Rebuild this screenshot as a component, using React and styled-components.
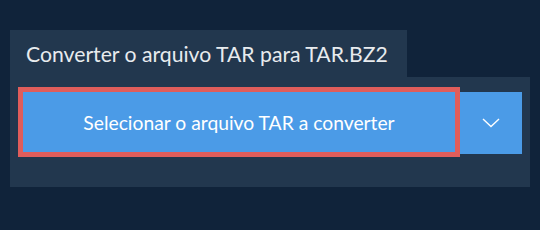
import styled, { createGlobalStyle } from 'styled-components';

const GlobalStyle = createGlobalStyle`
  html, body {
    margin: 0;
    padding: 0;
    background: #10233a;
  }
  body {
    font-family: Lato, "Noto Sans", sans-serif;
  }
`;

const StyledPage = styled.div`
  width: 540px;
  height: 230px;
  padding: 30px 10px 0 10px;
  box-sizing: border-box;
`;

const StyledTab = styled.div`
  display: inline-flex;
  align-items: center;
  height: 47px;
  padding: 0 19px 0 16px;
  background: #22374e;
  color: #e8ebee;
  font-size: 21.2px;
`;

const StyledPanel = styled.div`
  display: flex;
  align-items: flex-start;
  padding: 10px 8px 30px 8px;
  background: #22374e;
`;

const StyledMainButton = styled.button`
  flex: 1;
  height: 70px;
  box-sizing: border-box;
  border: 5px solid #e05d5b;
  background: #4b9be7;
  color: #ffffff;
  font-family: Lato, "Noto Sans", sans-serif;
  font-size: 19.3px;
  padding: 0;
  cursor: pointer;
`;

const StyledMenuButton = styled.button`
  display: flex;
  align-items: center;
  justify-content: center;
  width: 62px;
  height: 62px;
  margin-top: 5px;
  border: none;
  padding: 0;
  background: #4b9be7;
  cursor: pointer;
`;

export default function App() {
  return (
    <StyledPage>
      <GlobalStyle />
      <StyledTab>Converter o arquivo TAR para TAR.BZ2</StyledTab>
      <StyledPanel>
        <StyledMainButton>Selecionar o arquivo TAR a converter</StyledMainButton>
        <StyledMenuButton aria-label='mais opções'>
          <svg width='18' height='10' viewBox='0 0 18 10'>
            <path d='M1 1 L9 8.5 L17 1' fill='none' stroke='#ffffff' strokeWidth='1.4' />
          </svg>
        </StyledMenuButton>
      </StyledPanel>
    </StyledPage>
  );
}
